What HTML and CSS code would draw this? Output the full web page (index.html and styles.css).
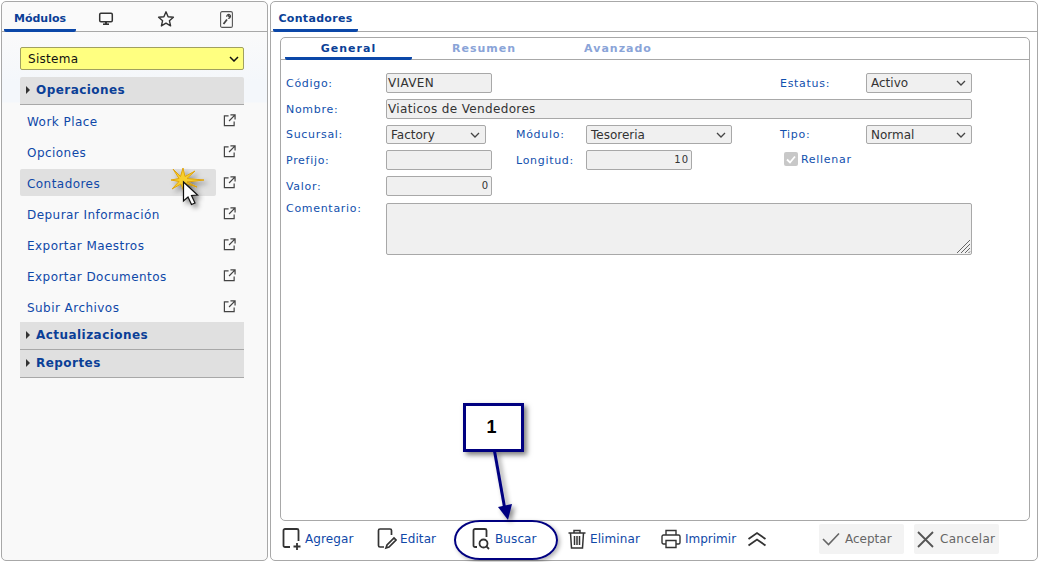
FILE: index.html
```html
<!DOCTYPE html>
<html lang="es">
<head>
<meta charset="utf-8">
<title>Contadores</title>
<link rel="stylesheet" href="styles.css">
</head>
<body>
<div class="app">
  <aside class="panel side">
    <nav class="tabs side-tabs">
      <span class="tab active mod">Módulos</span>
      <span class="tab icon-tab"><svg width="16" height="16" viewBox="0 0 16 16"><rect x="1.700" y="2.200" width="12.600" height="8.600" rx="1.200" fill="none" stroke="#333" stroke-width="1.500"/><path d="M5 13.200h6" stroke="#333" stroke-width="1.600"/><path d="M7 11h2v2H7z" fill="#333"/></svg></span>
      <span class="tab icon-tab"><svg width="18" height="18" viewBox="0 0 18 18"><path d="M9 1.800l2.100 4.900 5.300.5-4 3.500 1.200 5.200L9 13.200l-4.600 2.700 1.200-5.200-4-3.500 5.300-.5z" fill="none" stroke="#333" stroke-width="1.400" stroke-linejoin="round"/></svg></span>
      <span class="tab icon-tab"><svg width="13" height="17" viewBox="0 0 13 17"><rect x=".6" y=".6" width="11.800" height="15.800" rx="1.500" fill="none" stroke="#555" stroke-width="1.100"/><path d="M3.500 13l3.500-4.500" fill="none" stroke="#444" stroke-width="1.800"/><path d="M6.800 5.800a2 2 0 0 1 2.600-2.300L8.300 4.900l.9.800 1.200-1.200a2 2 0 0 1-2.400 2.700" fill="none" stroke="#444" stroke-width="1.100"/></svg></span>
    </nav>
    <div class="side-body">
      <div class="select yellow"><span>Sistema</span><svg class="chev" width="10" height="6" viewBox="0 0 10 6"><path d="M1 1l4 4 4-4" fill="none" stroke="#111" stroke-width="1.500"/></svg></div>
      <div class="acc first"><i class="tri"></i>Operaciones</div>
      <ul class="menu">
        <li><span>Work Place</span><svg class="ext" width="13" height="13" viewBox="0 0 14 14"><path d="M6 2H1.500v10.500H12V8M8 1h5v5M13 1L6.500 7.500" fill="none" stroke="#444" stroke-width="1.300"/></svg></li>
        <li><span>Opciones</span><svg class="ext" width="13" height="13" viewBox="0 0 14 14"><path d="M6 2H1.500v10.500H12V8M8 1h5v5M13 1L6.500 7.500" fill="none" stroke="#444" stroke-width="1.300"/></svg></li>
        <li class="hover"><span>Contadores</span><svg class="ext" width="13" height="13" viewBox="0 0 14 14"><path d="M6 2H1.500v10.500H12V8M8 1h5v5M13 1L6.500 7.500" fill="none" stroke="#444" stroke-width="1.300"/></svg></li>
        <li><span>Depurar Información</span><svg class="ext" width="13" height="13" viewBox="0 0 14 14"><path d="M6 2H1.500v10.500H12V8M8 1h5v5M13 1L6.500 7.500" fill="none" stroke="#444" stroke-width="1.300"/></svg></li>
        <li><span>Exportar Maestros</span><svg class="ext" width="13" height="13" viewBox="0 0 14 14"><path d="M6 2H1.500v10.500H12V8M8 1h5v5M13 1L6.500 7.500" fill="none" stroke="#444" stroke-width="1.300"/></svg></li>
        <li><span>Exportar Documentos</span><svg class="ext" width="13" height="13" viewBox="0 0 14 14"><path d="M6 2H1.500v10.500H12V8M8 1h5v5M13 1L6.500 7.500" fill="none" stroke="#444" stroke-width="1.300"/></svg></li>
        <li><span>Subir Archivos</span><svg class="ext" width="13" height="13" viewBox="0 0 14 14"><path d="M6 2H1.500v10.500H12V8M8 1h5v5M13 1L6.500 7.500" fill="none" stroke="#444" stroke-width="1.300"/></svg></li>
      </ul>
      <div class="acc"><i class="tri"></i>Actualizaciones</div>
      <div class="acc"><i class="tri"></i>Reportes</div>
    </div>
  </aside>

  <main class="panel content">
    <nav class="tabs"><span class="tab active cont">Contadores</span></nav>
    <section class="inner">
      <nav class="subtabs">
        <span class="sub on">General</span>
        <span class="sub">Resumen</span>
        <span class="sub">Avanzado</span>
      </nav>
      <form class="form">
        <label class="l r1 c1">Código:</label>
        <div class="f r1 c2">VIAVEN</div>
        <label class="l r1 c5">Estatus:</label>
        <div class="f sel r1 c6"><span>Activo</span><svg class="chev" width="10" height="6" viewBox="0 0 10 6"><path d="M1 1l4 4 4-4" fill="none" stroke="#444" stroke-width="1.300"/></svg></div>

        <label class="l r2 c1">Nombre:</label>
        <div class="f r2 wide">Viaticos de Vendedores</div>

        <label class="l r3 c1">Sucursal:</label>
        <div class="f sel r3 c2 short"><span>Factory</span><svg class="chev" width="10" height="6" viewBox="0 0 10 6"><path d="M1 1l4 4 4-4" fill="none" stroke="#444" stroke-width="1.300"/></svg></div>
        <label class="l r3 c3">Módulo:</label>
        <div class="f sel r3 c4 mid"><span>Tesoreria</span><svg class="chev" width="10" height="6" viewBox="0 0 10 6"><path d="M1 1l4 4 4-4" fill="none" stroke="#444" stroke-width="1.300"/></svg></div>
        <label class="l r3 c5">Tipo:</label>
        <div class="f sel r3 c6"><span>Normal</span><svg class="chev" width="10" height="6" viewBox="0 0 10 6"><path d="M1 1l4 4 4-4" fill="none" stroke="#444" stroke-width="1.300"/></svg></div>

        <label class="l r4 c1">Prefijo:</label>
        <div class="f r4 c2"></div>
        <label class="l r4 c3">Longitud:</label>
        <div class="f num r4 c4">10</div>
        <label class="l check r4 c5"><i class="box"><svg width="10" height="9" viewBox="0 0 10 9"><path d="M1 4.500l3 3 5-6" fill="none" stroke="#fff" stroke-width="1.800"/></svg></i>Rellenar</label>

        <label class="l r5 c1">Valor:</label>
        <div class="f num r5 c2">0</div>

        <label class="l r6 c1 top">Comentario:</label>
        <div class="f area r6 wide"><svg class="grip" width="15" height="15" viewBox="0 0 15 15"><path d="M14 1L1 14M14 5L5 14M14 9L9 14M14 12.500L12.500 14" stroke="#666" stroke-width="1"/></svg></div>
      </form>
    </section>
    <footer class="toolbar">
      <span class="act a1"><svg width="20" height="24" viewBox="0 0 20 24"><path d="M8 20H3a1.500 1.500 0 0 1-1.500-1.500v-15A1.500 1.500 0 0 1 3 2h12a1.500 1.500 0 0 1 1.500 1.500V14M15 16v7M11.500 19.500h7" fill="none" stroke="#333" stroke-width="1.800"/></svg>Agregar</span>
      <span class="act a2"><svg width="20" height="24" viewBox="0 0 20 24"><path d="M7 20H3a1.500 1.500 0 0 1-1.500-1.500v-15A1.500 1.500 0 0 1 3 2h10a1.500 1.500 0 0 1 1.500 1.500V8M9 21l1-3 7-7 2 2-7 7z" fill="none" stroke="#333" stroke-width="1.700"/></svg>Editar</span>
      <span class="act a3"><svg width="20" height="24" viewBox="0 0 20 24"><path d="M5 20H3a1.500 1.500 0 0 1-1.500-1.500v-15A1.500 1.500 0 0 1 3 2h10a1.500 1.500 0 0 1 1.500 1.500V10M17 22l-2.800-2.800" fill="none" stroke="#333" stroke-width="1.800"/><circle cx="11.500" cy="16.500" r="4" fill="none" stroke="#333" stroke-width="1.800"/></svg>Buscar</span>
      <span class="act a4"><svg width="20" height="22" viewBox="0 0 20 22"><path d="M1.500 5h17M7 5V2.500h6V5M3.500 5l1 15h11l1-15M7.500 8v9M10 8v9M12.500 8v9" fill="none" stroke="#333" stroke-width="1.500"/></svg>Eliminar</span>
      <span class="act a5"><svg width="20" height="20" viewBox="0 0 20 20"><path d="M5 6V1.500h10V6M5 15H2.500A1.500 1.500 0 0 1 1 13.500v-6A1.500 1.500 0 0 1 2.500 6h15A1.500 1.500 0 0 1 19 7.500v6a1.500 1.500 0 0 1-1.500 1.500H15M5 11.500h10v7H5z" fill="none" stroke="#333" stroke-width="1.400"/></svg>Imprimir</span>
      <svg class="up" width="20" height="16" viewBox="0 0 20 16"><path d="M1.500 8L10 2l8.500 6M1.500 14.500L10 8.500l8.500 6" fill="none" stroke="#333" stroke-width="1.800"/></svg>
      <span class="btn ok"><svg width="18" height="14" viewBox="0 0 18 14"><path d="M1 7l5.500 5.500L17 1.500" fill="none" stroke="#666" stroke-width="1.600"/></svg>Aceptar</span>
      <span class="btn no"><svg width="17" height="17" viewBox="0 0 17 17"><path d="M1 1l15 15M16 1L1 16" fill="none" stroke="#555" stroke-width="1.800"/></svg>Cancelar</span>
    </footer>
  </main>
</div>

<div class="callout">1</div>
<div class="ring"></div>
<svg class="overlay" width="1039" height="562" viewBox="0 0 1039 562">
  <defs>
    <filter id="sh" x="-50%" y="-50%" width="200%" height="200%"><feDropShadow dx="3" dy="3" stdDeviation="2.500" flood-color="#000" flood-opacity=".45"/></filter>
  </defs>
  <g filter="url(#sh)">
    <path d="M494.500 451L505 510" stroke="#000080" stroke-width="3" fill="none"/>
    <path d="M498 507L512 504L508 520z" fill="#000080"/>
  </g>
  <path d="M173 169L180.500 176.500L183 168L185 176.500L195 171L187 178.500L204 180L187 182L197 187L185.500 183.500L184 192L181 184L172 189L179 181.500L171 180L179 178.500z" fill="#f7cf2e" stroke="#e0a40a" stroke-width="1" filter="url(#sh)"/>
  <path d="M183.500 182v19l4.500-4 3.500 7.500 3.500-1.500-3.500-7.500 6-.5z" fill="#fff" stroke="#111" stroke-width="1.200" filter="url(#sh)"/>
</svg>
```
FILE: styles.css
```css
* { box-sizing: border-box; }
html, body { margin: 0; padding: 0; }
body {
  width: 1039px;
  height: 562px;
  overflow: hidden;
  background: #fff;
  position: relative;
  font-family: "DejaVu Sans", sans-serif;
  font-size: 12px;
  color: #0f48a8;
}
.app {
  display: flex;
  gap: 2px;
  height: 561px;
  padding: 1px 1px 0;
}
.panel {
  border: 1px solid #a8a8a8;
  border-radius: 5px;
  display: flex;
  flex-direction: column;
}
.side {
  width: 267px;
  flex: none;
  background: linear-gradient(#fafafa 30px, #f4f7fb 80px, #f4f7fb 100px, #f9f9f9 101px);
}
.content { flex: 1; background: #fff; }

.tabs {
  display: flex;
  height: 30px;
  flex: none;
  border-bottom: 1px solid #a8a8a8;
  padding-left: 2px;
}
.tab {
  height: 30px;
  font-weight: bold;
  color: #0b3f97;
  line-height: 30px;
  text-align: center;
  font-size: 11px;
}
.tab.active {
  border-bottom: 3px solid #0b47a8;
  border-radius: 0 0 2px 2px;
  line-height: 33px;
}
.mod { width: 72px; }
.cont { width: 85px; letter-spacing: .3px; }
.icon-tab {
  width: 60px;
  display: flex;
  align-items: center;
  justify-content: center;
  padding-top: 4px;
}

.side-body {
  padding: 15px 23px 0 18px;
  display: flex;
  flex-direction: column;
}
.select {
  display: flex;
  align-items: center;
  justify-content: space-between;
}
.yellow {
  height: 23px;
  background: #ffff80;
  border: 1px solid #a0a060;
  border-radius: 2px;
  padding: 0 4px 0 7px;
  color: #111;
  font-size: 12px;
  letter-spacing: .3px;
}
.acc {
  height: 28px;
  background: #e0e0e0;
  border-bottom: 1px solid #a8a8a8;
  font-weight: bold;
  font-size: 12px;
  letter-spacing: .45px;
  color: #0b3f97;
  display: flex;
  align-items: center;
  padding: 0 0 2px 6px;
}
.acc.first { margin-top: 7px; border-radius: 2px 2px 0 0; }
.tri {
  width: 0;
  height: 0;
  border-left: 4px solid #333;
  border-top: 4px solid transparent;
  border-bottom: 4px solid transparent;
  margin-right: 6px;
}
.menu {
  list-style: none;
  margin: 0;
  padding: 0;
}
.menu li {
  height: 31px;
  display: flex;
  align-items: center;
  justify-content: space-between;
  padding: 3px 8px 0 7px;
  position: relative;
  letter-spacing: .45px;
}
.menu li.hover::before {
  content: "";
  position: absolute;
  left: 0;
  top: 2px;
  width: 196px;
  height: 27px;
  background: #e0e0e0;
  border-radius: 2px;
}
.menu li span { position: relative; }
.ext { position: relative; margin-top: -3px; }

.inner {
  margin: 5px 7px 0 9px;
  border: 1px solid #a8a8a8;
  border-radius: 5px;
  height: 484px;
  flex: none;
  background: #fff;
}
.subtabs {
  display: flex;
  height: 22px;
  border-bottom: 1px solid #a8a8a8;
  padding-left: 4px;
}
.sub {
  width: 134px;
  text-align: center;
  font-weight: bold;
  font-size: 11px;
  line-height: 21px;
  color: #8aa4d8;
  letter-spacing: 1px;
}
.sub.on {
  width: 127px;
  color: #0b3f97;
  height: 22px;
  border-bottom: 3px solid #0b47a8;
  border-radius: 0 0 2px 2px;
  margin-right: 5px;
}
.form {
  display: grid;
  grid-template-columns: 100px 130px 70px 194px 86px 106px;
  grid-template-rows: 20px 20px 19px 20px 20px 53px;
  row-gap: 6px;
  padding: 13px 0 0 5px;
}
.l {
  font-size: 11px;
  letter-spacing: .7px;
  color: #1150ad;
  align-self: center;
  white-space: nowrap;
}
.l.top { align-self: start; }
.f {
  background: #f0f0f0;
  border: 1px solid #a8a8a8;
  border-radius: 2px;
  color: #333;
  font-size: 12px;
  letter-spacing: .35px;
  padding: 0 1px;
  line-height: 18px;
  display: flex;
  align-items: center;
  justify-content: space-between;
}
.f.sel { padding: 0 5px 0 4px; letter-spacing: 0; }
.f.num { justify-content: flex-end; font-size: 10px; letter-spacing: 1px; padding-right: 2px; }
.f.area { position: relative; margin-top: 1px; }
.grip { position: absolute; right: 0; bottom: 0; }
.r1 { grid-row: 1; } .r2 { grid-row: 2; } .r3 { grid-row: 3; }
.r4 { grid-row: 4; } .r5 { grid-row: 5; } .r6 { grid-row: 6; }
.c1 { grid-column: 1; } .c2 { grid-column: 2; width: 106px; }
.c3 { grid-column: 3; } .c4 { grid-column: 4; width: 106px; }
.c5 { grid-column: 5; } .c6 { grid-column: 6; }
.f.short { width: 100px; }
.f.mid { width: 146px; }
.wide { grid-column: 2 / 7; }
.check {
  display: flex;
  align-items: center;
  gap: 3px;
  padding: 0 0 2px 4px;
  white-space: nowrap;
}
.box {
  width: 14px;
  height: 14px;
  background: #c8c8c8;
  border-radius: 2px;
  display: flex;
  align-items: center;
  justify-content: center;
}

.toolbar {
  display: flex;
  align-items: center;
  height: 37px;
  padding: 0 0 3px 11px;
  margin-top: 1px;
}
.act {
  display: flex;
  align-items: center;
  gap: 3px;
  color: #0f48a8;
  letter-spacing: .1px;
}
.a1 { width: 95px; } .a2 { width: 95px; } .a3 { width: 95px; }
.a4 { width: 94px; } .a5 { width: 86px; gap: 4px; letter-spacing: 0; }
.up { flex: none; }
.btn {
  display: flex;
  align-items: center;
  gap: 6px;
  width: 85px;
  height: 30px;
  background: #f3f3f3;
  border-radius: 2px;
  color: #666;
  padding-left: 3px;
  margin-left: 10px;
}
.btn.ok { margin-left: 52px; gap: 5px; }
.btn.no { letter-spacing: .3px; }

.callout {
  position: absolute;
  left: 463px;
  top: 403px;
  width: 61px;
  height: 49px;
  border: 3px solid #000080;
  background: #fff;
  box-shadow: 3px 3px 5px rgba(0,0,0,.5);
  color: #000;
  font: bold 18px "Liberation Sans", sans-serif;
  display: flex;
  align-items: center;
  justify-content: center;
  padding-right: 4px;
  padding-bottom: 1px;
}
.ring {
  position: absolute;
  left: 454px;
  top: 520px;
  width: 104px;
  height: 40px;
  border: 2px solid #000080;
  border-radius: 26px / 20px;
  box-shadow: 2px 2px 4px rgba(0,0,0,.3);
}
.overlay { position: absolute; left: 0; top: 0; pointer-events: none; }
```
